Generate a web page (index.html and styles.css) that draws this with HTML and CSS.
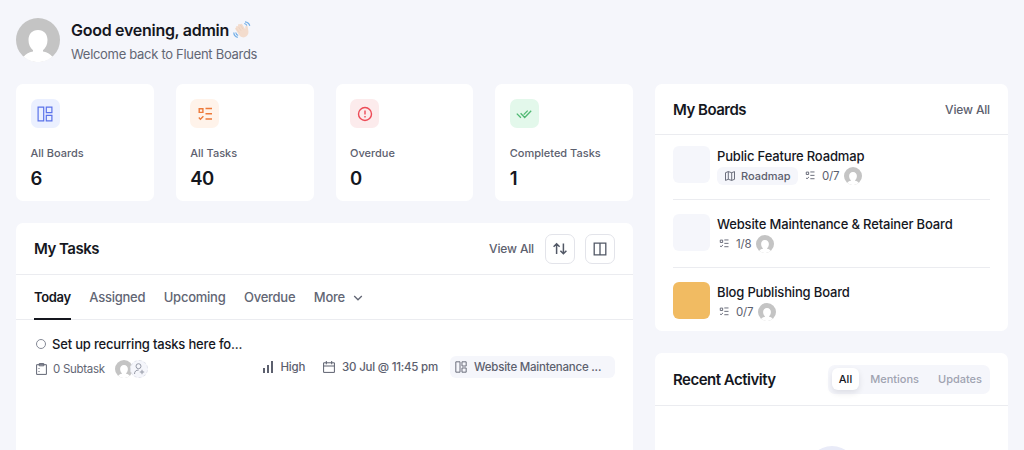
FILE: index.html
```html
<!DOCTYPE html>
<html lang="en">
<head>
    <meta charset="utf-8">
    <title>Fluent Boards</title>
    <link rel="stylesheet" href="styles.css">
</head>
<body>
    <!-- Shared icons -->
    <svg class="sprite" width="0" height="0">
        <symbol id="i-avatar" viewBox="0 0 44 44">
            <circle cx="22" cy="22" r="22" fill="#c4c4c4"/>
            <path d="M22 12c-6 0-9.500 4.300-9.500 10 0 4.500 1.800 8 4.500 10.200v1.300c-4.500.8-7.500 3-9.400 5.200A22 22 0 0 0 36.400 38.700c-1.900-2.200-4.900-4.400-9.400-5.200v-1.300c2.700-2.200 4.500-5.700 4.500-10.200 0-5.700-3.500-10-9.500-10z" fill="#fff"/>
        </symbol>
        <symbol id="i-board" viewBox="0 0 16 16">
            <path d="M1.100 1.100h5.600v13.800H1.100zM9.300 1.100h5.600v5.600H9.300zM9.300 9.300h5.600v5.600H9.300z" fill="none" stroke="currentColor" stroke-width="1.200"/>
        </symbol>
        <symbol id="i-tasks" viewBox="0 0 14 14">
            <path d="M1.200 1.700h3.700v3.700H1.200zM7.500 1.500H14M7.500 6.800H14M7.500 12H14M.8 10.600l1.600 1.600 3-3" fill="none" stroke="currentColor" stroke-width="1.400"/>
        </symbol>
    </svg>

    <header class="welcome">
        <svg class="welcome-avatar"><use href="#i-avatar"/></svg>
        <div>
            <h1 class="welcome-title">
                <span>Good evening, admin</span>
                <svg class="wave" viewBox="0 0 18 18">
                    <path d="M3 5.500c.8-1 1.700-.6 2.300.1L4.900 4c.3-1.300 1.700-1.400 2.300-.4C7.700 2.500 9 2.700 9.500 3.700l2.700 4.500.2-2.600c.2-1.300 2.200-1.200 2.300.2.100 2.200 1.200 4.400.6 6.800-.8 3-3.800 4.600-6.700 3.500-1.600-.6-2.600-2-3.500-3.500L2.300 8.100c-.4-.8.200-1.600.9-1.400z" fill="#f3dccd"/>
                    <path d="M5.300 5.600l2.900 4.300M7.200 3.600l2.900 4.700M3.200 7.400l3.200 4.300" fill="none" stroke="#e6cab9" stroke-width=".5"/>
                    <path d="M11.200 2.500c1.300.1 2.100.8 2.700 2M12 .8c2.300.2 4 1.500 4.800 4M.8 11.400c.1 2.500 1.400 4.300 4 4.900M2.700 11.500c.3 1.500 1.100 2.500 2.500 3" fill="none" stroke="#73aee6" stroke-width="1.200"/>
                </svg>
            </h1>
            <p class="welcome-text">Welcome back to Fluent Boards</p>
        </div>
    </header>

    <main class="dashboard">
        <div class="main-col">
            <section class="stats">
                <div class="stat">
                    <div class="stat-icon blue"><svg width="16" height="16"><use href="#i-board"/></svg></div>
                    <div class="stat-label">All Boards</div>
                    <div class="stat-value">6</div>
                </div>
                <div class="stat">
                    <div class="stat-icon orange"><svg width="14" height="14"><use href="#i-tasks"/></svg></div>
                    <div class="stat-label">All Tasks</div>
                    <div class="stat-value">40</div>
                </div>
                <div class="stat">
                    <div class="stat-icon red">
                        <svg width="16" height="16" viewBox="0 0 16 16" fill="none" stroke="currentColor" stroke-width="1.400"><circle cx="8" cy="8" r="6.500"/><path d="M8 4.600v4M8 9.900v1.500"/></svg>
                    </div>
                    <div class="stat-label">Overdue</div>
                    <div class="stat-value">0</div>
                </div>
                <div class="stat">
                    <div class="stat-icon green">
                        <svg width="16" height="16" viewBox="0 0 16 16" fill="none" stroke="currentColor" stroke-width="1.300"><path d="M.8 7.600l4.100 4.100M4.600 7.300l4.100 4.200 6.500-6.700M7.700 8.600l4-4"/></svg>
                    </div>
                    <div class="stat-label">Completed Tasks</div>
                    <div class="stat-value">1</div>
                </div>
            </section>

            <section class="panel tasks">
                <div class="panel-head">
                    <h2 class="panel-title">My Tasks</h2>
                    <div class="panel-actions">
                        <a class="view-all">View All</a>
                        <button class="icon-btn">
                            <svg width="16" height="16" viewBox="0 0 16 16" fill="none" stroke="currentColor" stroke-width="1.500"><path d="M4.600 13V2.800M1.600 5.700l3-3 3 3M11.400 2.500v10.200M8.400 9.800l3 3 3-3"/></svg>
                        </button>
                        <button class="icon-btn">
                            <svg width="14" height="14" viewBox="0 0 14 14" fill="none" stroke="currentColor" stroke-width="1.300"><path d="M1.200 1.200h11.600v11.600H1.200zM7 1.200v11.600"/></svg>
                        </button>
                    </div>
                </div>
                <nav class="tabs">
                    <a class="tab active">Today</a>
                    <a class="tab">Assigned</a>
                    <a class="tab">Upcoming</a>
                    <a class="tab">Overdue</a>
                    <a class="tab more">More
                        <svg width="10" height="10" viewBox="0 0 10 10" fill="none" stroke="currentColor" stroke-width="1.300"><path d="M1.200 3l3.800 3.800L8.800 3"/></svg>
                    </a>
                </nav>
                <div class="task">
                    <div class="task-info">
                        <div class="task-name"><span class="task-status"></span>Set up recurring tasks here fo...</div>
                        <div class="task-sub">
                            <svg width="11" height="12" viewBox="0 0 11 12" fill="none" stroke="currentColor"><path d="M.6 1.700h9.800v9.700H.6zM3.200.6h4.600v2.200H3.200zM3 5v1M3 8v1"/></svg>
                            <span class="subtask">0 Subtask</span>
                            <svg class="avatar"><use href="#i-avatar"/></svg>
                            <span class="add-user">
                                <svg width="12" height="12" viewBox="0 0 12 12" fill="none" stroke="currentColor"><circle cx="5.500" cy="3.200" r="2.500"/><path d="M1.500 11c0-2.500 1.500-4 4.200-4M9 6.800v4.400M6.800 9h4.400"/></svg>
                            </span>
                        </div>
                    </div>
                    <div class="task-meta">
                        <div class="meta">
                            <svg width="10" height="12" viewBox="0 0 10 12" fill="currentColor"><path d="M0 7h2v5H0zM4 4h2v8H4zM8 0h2v12H8z"/></svg>
                            <span>High</span>
                        </div>
                        <div class="meta due">
                            <svg width="12" height="12" viewBox="0 0 12 12" fill="none" stroke="currentColor"><path d="M.6 1.800h10.800v9.600H.6zM.6 5h10.800M3.300 0v3.300M8.700 0v3.300"/></svg>
                            <span>30 Jul @ 11:45 pm</span>
                        </div>
                        <div class="meta board-chip">
                            <svg width="12" height="12"><use href="#i-board"/></svg>
                            <span>Website Maintenance ...</span>
                        </div>
                    </div>
                </div>
            </section>
        </div>

        <aside class="side-col">
            <section class="panel boards">
                <div class="panel-head">
                    <h2 class="panel-title">My Boards</h2>
                    <a class="view-all">View All</a>
                </div>
                <ul class="board-list">
                    <li class="board">
                        <span class="board-thumb"></span>
                        <div>
                            <div class="board-name">Public Feature Roadmap</div>
                            <div class="board-meta">
                                <span class="tag">
                                    <svg width="10" height="10" viewBox="0 0 10 10" fill="none" stroke="currentColor" stroke-width=".9"><path d="M.5 1.700l2.800-1.100 3.400 1.100L9.500.6v7.700L6.700 9.400 3.300 8.300.5 9.400zM3.300.6v7.700M6.700 1.700v7.700"/></svg>
                                    <span>Roadmap</span>
                                </span>
                                <svg class="count-icon"><use href="#i-tasks"/></svg>
                                <span class="count">0/7</span>
                                <svg class="avatar"><use href="#i-avatar"/></svg>
                            </div>
                        </div>
                    </li>
                    <li class="board">
                        <span class="board-thumb"></span>
                        <div>
                            <div class="board-name">Website Maintenance &amp; Retainer Board</div>
                            <div class="board-meta">
                                <svg class="count-icon"><use href="#i-tasks"/></svg>
                                <span class="count">1/8</span>
                                <svg class="avatar"><use href="#i-avatar"/></svg>
                            </div>
                        </div>
                    </li>
                    <li class="board">
                        <span class="board-thumb yellow"></span>
                        <div>
                            <div class="board-name">Blog Publishing Board</div>
                            <div class="board-meta">
                                <svg class="count-icon"><use href="#i-tasks"/></svg>
                                <span class="count">0/7</span>
                                <svg class="avatar"><use href="#i-avatar"/></svg>
                            </div>
                        </div>
                    </li>
                </ul>
            </section>

            <section class="panel activity">
                <div class="panel-head">
                    <h2 class="panel-title">Recent Activity</h2>
                    <div class="switch">
                        <span class="switch-item on">All</span>
                        <span class="switch-item">Mentions</span>
                        <span class="switch-item">Updates</span>
                    </div>
                </div>
                <div class="empty">
                    <span class="empty-circle"></span>
                </div>
            </section>
        </aside>
    </main>
</body>
</html>
```

FILE: styles.css
```css
* {
    box-sizing: border-box;
}
body {
    margin: 0;
    padding: 18px 16px 0;
    height: 450px;
    overflow: hidden;
    background: #f5f6fb;
    color: #15171e;
    font-family: Inter, "Liberation Sans", sans-serif;
    font-size: 12px;
    font-weight: 500;
}
h1, h2, p, ul {
    margin: 0;
    padding: 0;
}
svg {
    display: block;
    flex: none;
}
.sprite {
    position: absolute;
}

/* Header */
.welcome {
    display: flex;
    gap: 11px;
    height: 66px;
}
.welcome-avatar {
    width: 44px;
    height: 44px;
}
.welcome-title {
    display: flex;
    align-items: center;
    gap: 4px;
    font-size: 16px;
    font-weight: 600;
    line-height: 24px;
    letter-spacing: -0.28px;
}
.wave {
    width: 18px;
    height: 18px;
}
.welcome-text {
    margin-top: 2px;
    color: #626674;
    font-size: 13px;
    font-weight: 400;
    line-height: 20px;
    letter-spacing: -0.3px;
}

/* Columns */
.dashboard {
    display: grid;
    grid-template-columns: 617px 353px;
    gap: 22px;
}
.main-col,
.side-col {
    display: flex;
    flex-direction: column;
    gap: 22px;
}

/* Stat cards */
.stats {
    display: grid;
    grid-template-columns: repeat(4, 1fr);
    gap: 22px;
}
.stat {
    height: 117px;
    padding: 15px 14.500px;
    background: #fff;
    border-radius: 7px;
}
.stat-icon {
    display: flex;
    align-items: center;
    justify-content: center;
    width: 29px;
    height: 29px;
    border-radius: 7px;
}
.blue {
    background: #ebf0ff;
    color: #5b72ea;
}
.orange {
    background: #fff3ea;
    color: #ed7a3a;
}
.red {
    background: #fcebec;
    color: #ed4b57;
}
.green {
    background: #e3f8eb;
    color: #4fb872;
}
.stat-label {
    margin-top: 17px;
    color: #5c606e;
    font-size: 11px;
    line-height: 17px;
    white-space: nowrap;
}
.stat-value {
    margin-top: 4px;
    font-size: 18.500px;
    font-weight: 600;
    line-height: 25px;
    letter-spacing: -0.5px;
}

/* Panels */
.panel {
    background: #fff;
    border-radius: 7px;
}
.panel-head {
    display: flex;
    align-items: center;
    justify-content: space-between;
    height: 52px;
    padding: 0 18px;
    border-bottom: 1px solid #ebecf0;
}
.panel-title {
    font-size: 15px;
    font-weight: 600;
    letter-spacing: -0.5px;
}
.panel-actions {
    display: flex;
    align-items: center;
    gap: 11px;
}
.view-all {
    color: #5c606e;
    font-size: 12px;
    letter-spacing: -0.15px;
}
.icon-btn {
    display: flex;
    align-items: center;
    justify-content: center;
    width: 30px;
    height: 30px;
    padding: 0;
    border: 1px solid #e3e4ea;
    border-radius: 7px;
    background: #fff;
    color: #525866;
}
.icon-btn + .icon-btn {
    margin-left: -1px;
}

/* My tasks */
.tasks {
    height: 227px;
    border-radius: 7px 7px 0 0;
}
.tabs {
    display: flex;
    gap: 18.500px;
    height: 45px;
    padding: 0 18px;
    border-bottom: 1px solid #ebecf0;
}
.tab {
    height: 45px;
    color: #626674;
    font-size: 13px;
    line-height: 45px;
    letter-spacing: -0.25px;
}
.tab.active {
    color: #15171e;
    font-weight: 600;
    letter-spacing: -0.35px;
    border-bottom: 2px solid #15171e;
}
.more {
    display: flex;
    align-items: center;
    gap: 8px;
}
.task {
    display: flex;
    justify-content: space-between;
    padding: 14px 18px 0 20px;
}
.task-name {
    display: flex;
    align-items: center;
    height: 20px;
    font-size: 13px;
    letter-spacing: -0.18px;
}
.task-status {
    width: 10px;
    height: 10px;
    margin-right: 6px;
    border: 1px solid #858996;
    border-radius: 50%;
}
.task-sub {
    display: flex;
    align-items: center;
    height: 20px;
    margin-top: 5px;
    color: #626674;
}
.subtask {
    margin: 0 10px 0 6px;
    font-size: 11.500px;
    font-weight: 400;
    letter-spacing: -0.3px;
}
.avatar {
    width: 18px;
    height: 18px;
}
.add-user {
    display: flex;
    align-items: center;
    justify-content: center;
    width: 18px;
    height: 18px;
    margin-left: -3px;
    border: 1px dashed #dfe1ea;
    border-radius: 50%;
    background: #f5f6fb;
    color: #9599a6;
    z-index: 1;
}
.task-info {
    padding-left: 1px;
    margin-left: -1px;
}
.task-meta {
    display: flex;
    align-items: center;
    height: 22px;
    margin-top: 22px;
    color: #5c606e;
}
.meta {
    display: flex;
    align-items: center;
    gap: 7px;
    font-size: 11.500px;
    letter-spacing: -0.22px;
    white-space: nowrap;
}
.due {
    margin: 0 12px 0 18px;
}
.board-chip {
    width: 165px;
    height: 22px;
    padding-left: 5px;
    border-radius: 6px;
    background: #f5f6fb;
}

/* My boards */
.boards {
    height: 247px;
}
.boards .panel-head {
    height: 51px;
}
.board-list {
    padding: 0 18px;
    list-style: none;
}
.board {
    display: flex;
    gap: 7px;
    height: 68px;
    padding-top: 11px;
}
.board:first-child {
    height: 64px;
}
.board + .board {
    height: 68px;
    border-top: 1px solid #ebecf0;
    padding-top: 14px;
}
.board:last-child {
    height: 60px;
}
.board-thumb {
    width: 37px;
    height: 37px;
    border-radius: 6px;
    background: #f5f6fb;
}
.yellow {
    background: #f1bb62;
}
.board-name {
    font-size: 13px;
    line-height: 20px;
    letter-spacing: -0.16px;
    white-space: nowrap;
}
.board-meta {
    display: flex;
    align-items: center;
    height: 19px;
    padding-left: 2px;
    color: #5c606e;
}
.tag {
    display: flex;
    align-items: center;
    gap: 6px;
    width: 81px;
    height: 18px;
    margin: 0 7px 0 -2px;
    padding-left: 8px;
    border-radius: 6px;
    background: #f5f6fb;
    font-size: 11px;
}
.count-icon {
    width: 10px;
    height: 9px;
}
.count {
    margin: 0 5px 0 7px;
    font-size: 11.500px;
    font-weight: 400;
    letter-spacing: -0.2px;
}

/* Recent activity */
.activity {
    height: 97px;
    border-radius: 7px 7px 0 0;
}
.activity .panel-head {
    height: 53px;
}
.switch {
    display: flex;
    align-items: center;
    height: 29px;
    padding: 0 4px;
    border-radius: 7px;
    background: #f5f6fb;
}
.switch-item {
    height: 22px;
    padding: 0 0 0 11px;
    color: #a0a3b1;
    font-size: 11px;
    line-height: 22px;
}
.switch-item + .switch-item + .switch-item {
    padding: 0 4px 0 19px;
}
.switch-item.on {
    padding: 0 7px;
    border-radius: 6px;
    background: #fff;
    box-shadow: 0 3px 6px rgba(20, 23, 40, 0.1);
    color: #15171e;
}
.empty {
    display: flex;
    justify-content: center;
    height: 44px;
    padding-top: 40px;
    overflow: hidden;
}
.empty-circle {
    flex: none;
    width: 50px;
    height: 50px;
    border-radius: 50%;
    background: #e9ebf8;
}
```
